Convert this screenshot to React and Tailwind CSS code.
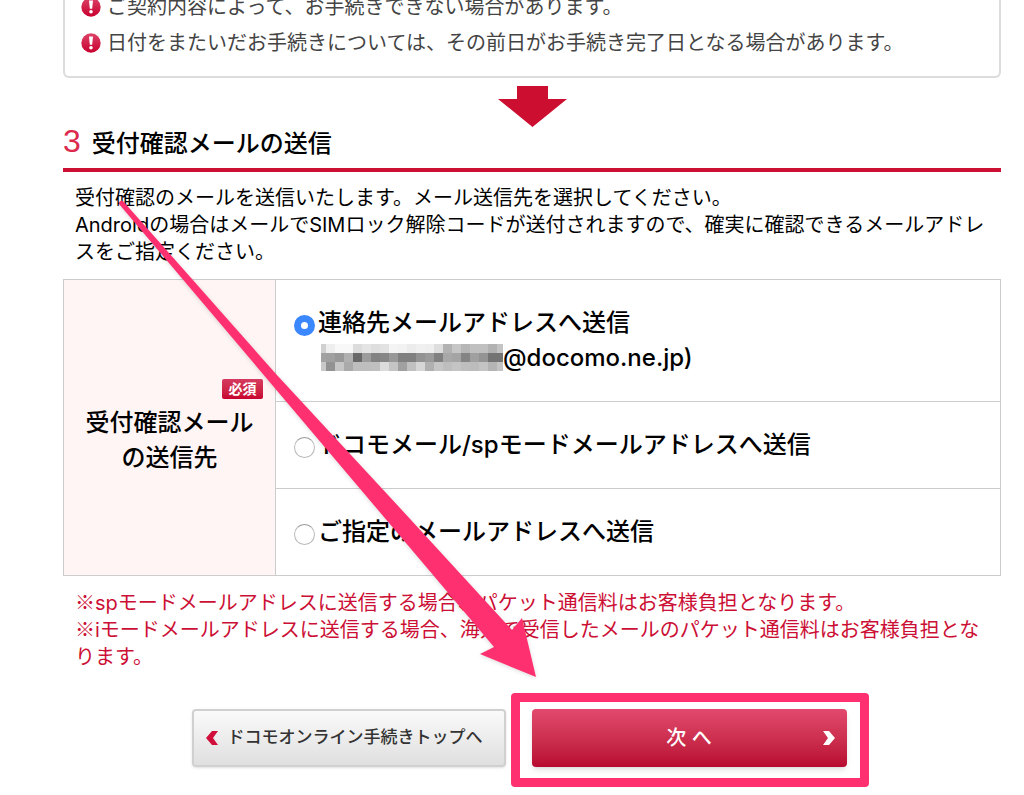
import { useState } from "react";

const notes = [
  "ご契約内容によって、お手続きできない場合があります。",
  "日付をまたいだお手続きについては、その前日がお手続き完了日となる場合があります。",
];

const options = [
  { id: "contact", label: "連絡先メールアドレスへ送信", domain: "@docomo.ne.jp)" },
  { id: "docomo", label: "ドコモメール/spモードメールアドレスへ送信" },
  { id: "custom", label: "ご指定のメールアドレスへ送信" },
];

// grey levels of the censored address, one list per row
const mosaic = [
  ["#d0d0d0", "#eeeeee", "#f8f8f8", "#f8f8f8", "#dcdcdc", "#e4e4e4", "#dedede", "#e2e2e2", "#f4f4f4", "#f2f2f2", "#ececec", "#f0f0f0", "#eeeeee", "#dedede", "#b2b2b2", "#c6c6c6", "#b6b6b6", "#c0c0c0", "#c0c0c0", "#b2b2b2", "#c4c4c4"],
  ["#a2a2a2", "#a0a0a0", "#989898", "#b0b0b0", "#686868", "#9c9c9c", "#828282", "#868686", "#989898", "#808080", "#808080", "#929292", "#9a9a9a", "#808080", "#a8a8a8", "#a4a4a4", "#848484", "#a0a0a0", "#949494", "#747474", "#747474"],
  ["#c8c8c8", "#929292", "#c6c6c6", "#aaaaaa", "#bebebe", "#bebebe", "#c0c0c0", "#dcdcdc", "#c4c4c4", "#a0a0a0", "#c0c0c0", "#d6d6d6", "#b0b0b0", "#c6c6c6", "#bebebe", "#c4c4c4", "#bebebe", "#bcbcbc", "#c4c4c4", "#b4b4b4", "#c4c4c4"],
];

function AlertIcon() {
  return (
    <svg className="size-5 shrink-0" viewBox="0 0 20 20" aria-hidden="true">
      <defs>
        <linearGradient id="alert" x1="0" y1="0" x2="0" y2="1">
          <stop offset="0" stopColor="#dc4468" />
          <stop offset="1" stopColor="#c8002f" />
        </linearGradient>
      </defs>
      <circle cx="10" cy="10" r="9.7" fill="url(#alert)" />
      <path d="M8 3.500h4l-.8 8.300H8.800z" fill="#fff" />
      <circle cx="10" cy="14.800" r="1.800" fill="#fff" />
    </svg>
  );
}

function Mosaic() {
  return (
    <svg className="h-[27px] w-[182px] shrink-0" viewBox="0 0 182 27" shapeRendering="crispEdges" aria-hidden="true">
      {mosaic.map((row, y) =>
        row.map((fill, i) => (
          <rect key={i + "-" + y} x={i === 0 ? 0 : 5 + (i - 1) * 9} y={y * 9} width={i === 0 ? 5 : 9} height="9" fill={fill} />
        ))
      )}
    </svg>
  );
}

function Radio({ id, checked, onChange }) {
  return (
    <input
      type="radio"
      name="sendTo"
      id={id}
      checked={checked}
      onChange={onChange}
      className="mt-2.5 size-[21px] shrink-0 appearance-none rounded-full border border-[#b8b8b8] border-t-[#999] bg-white checked:border-[7px] checked:border-[#3b87fd]"
    />
  );
}

function Kome() {
  return <span className="font-['Noto_Sans_CJK_JP',sans-serif] leading-none">※</span>;
}

export default function App() {
  const [sendTo, setSendTo] = useState("contact");

  return (
    <main className="relative overflow-hidden bg-white pr-[23px] pb-7 pl-[63px] font-[Inter,'Noto_Sans_CJK_JP',sans-serif] text-xl text-black">
      <ul className="-mt-[11px] rounded-b-md border-2 border-t-0 border-[#dcdcdc] px-4 pb-[15px] text-[#444]">
        {notes.map((note) => (
          <li key={note} className="flex items-center gap-1.5 leading-9">
            <AlertIcon />
            {note}
          </li>
        ))}
      </ul>

      <svg className="mx-auto mt-2 h-[41px] w-[69px]" viewBox="0 0 69 41" aria-hidden="true">
        <path d="M19 0h31v13h19L34.500 41 0 13h19z" fill="#cc0f30" />
      </svg>

      <h2 className="flex items-start gap-[11px] border-b-4 border-[#cc1033] pb-2 text-2xl leading-[33px] font-medium">
        <span className="font-['Liberation_Sans',sans-serif] text-[32px] leading-7 font-normal text-[#dc2a4c]">3</span>
        受付確認メールの送信
      </h2>

      <p className="mt-[13px] px-3 leading-[27px]">
        受付確認のメールを送信いたします。メール送信先を選択してください。
        <br />
        Androidの場合はメールでSIMロック解除コードが送付されますので、確実に確認できるメールアドレスをご指定ください。
      </p>

      <table className="mt-[13px] w-full border-collapse text-2xl leading-[35px] font-medium">
        <tbody>
          {options.map((o, i) => (
            <tr key={o.id}>
              {i === 0 && (
                <th rowSpan={3} scope="rowgroup" className="w-[212px] border border-[#ccc] bg-[#fff5f4] px-3 pb-0.5 font-medium">
                  <span className="ml-auto block h-5 w-[41px] rounded-xs bg-linear-to-b from-[#d63a60] to-[#c8002f] text-center text-sm leading-5 font-bold text-white">
                    必須
                  </span>
                  <span className="mt-1.5 block">
                    受付確認メール
                    <br />
                    の送信先
                  </span>
                </th>
              )}
              <td className="border border-[#ccc] px-[18px] pt-[25px] pb-[26px]">
                <div className="flex gap-[3px]">
                  <Radio id={o.id} checked={sendTo === o.id} onChange={() => setSendTo(o.id)} />
                  <label htmlFor={o.id}>
                    {o.label}
                    {o.domain && (
                      <span className="flex items-center pl-[3px]">
                        <Mosaic />
                        {o.domain}
                      </span>
                    )}
                  </label>
                </div>
              </td>
            </tr>
          ))}
        </tbody>
      </table>

      <p className="mt-3.5 px-3 leading-[27px] text-[#cc0f35]">
        <Kome />
        spモードメールアドレスに送信する場合、パケット通信料はお客様負担となります。
        <br />
        <Kome />
        iモードメールアドレスに送信する場合、海外で受信したメールのパケット通信料はお客様負担となります。
      </p>

      <div className="mt-[38px] flex justify-center gap-[26px] pr-[26px]">
        <button
          type="button"
          className="flex h-[58px] w-[314px] items-center gap-2.5 rounded-sm border-2 border-[#d0d0d0] bg-linear-to-b from-[#fafafa] to-[#dfdfdf] px-3 text-[17px] font-medium whitespace-nowrap text-[#333] shadow-sm"
        >
          <svg className="h-3.5 w-3 shrink-0" viewBox="0 0 12 14" aria-hidden="true">
            <path d="M6 0h6L7 7l5 7H6L0 7z" fill="#d0103a" />
          </svg>
          ドコモオンライン手続きトップへ
        </button>
        <div className="relative">
          <button
            type="button"
            className="flex h-[58px] w-[315px] items-center rounded-sm bg-linear-to-b from-[#e2496e] to-[#b80730] px-3 text-xl font-medium text-white shadow-md"
          >
            <span className="flex-1 pl-3 text-center">次 へ</span>
            <svg className="h-3.5 w-3 shrink-0" viewBox="0 0 12 14" aria-hidden="true">
              <path d="M0 0h6l6 7-6 7H0l5-7z" fill="#fff" />
            </svg>
          </button>
          <div className="pointer-events-none absolute -top-4 -right-[22px] -bottom-5 -left-[21px] rounded-sm border-9 border-[#ff3070]" />
        </div>
      </div>

      {/* pointer from the instructions down to the next button */}
      <svg className="pointer-events-none absolute top-[200px] left-[118px] h-[480px] w-[424px] drop-shadow-sm" viewBox="118 200 424 480" aria-hidden="true">
        <path d="M119 204q0-4 4-3L276 374 400 508 512 630l10-12 14 59-56-23 14-7z" fill="#ff3070" />
      </svg>
    </main>
  );
}
